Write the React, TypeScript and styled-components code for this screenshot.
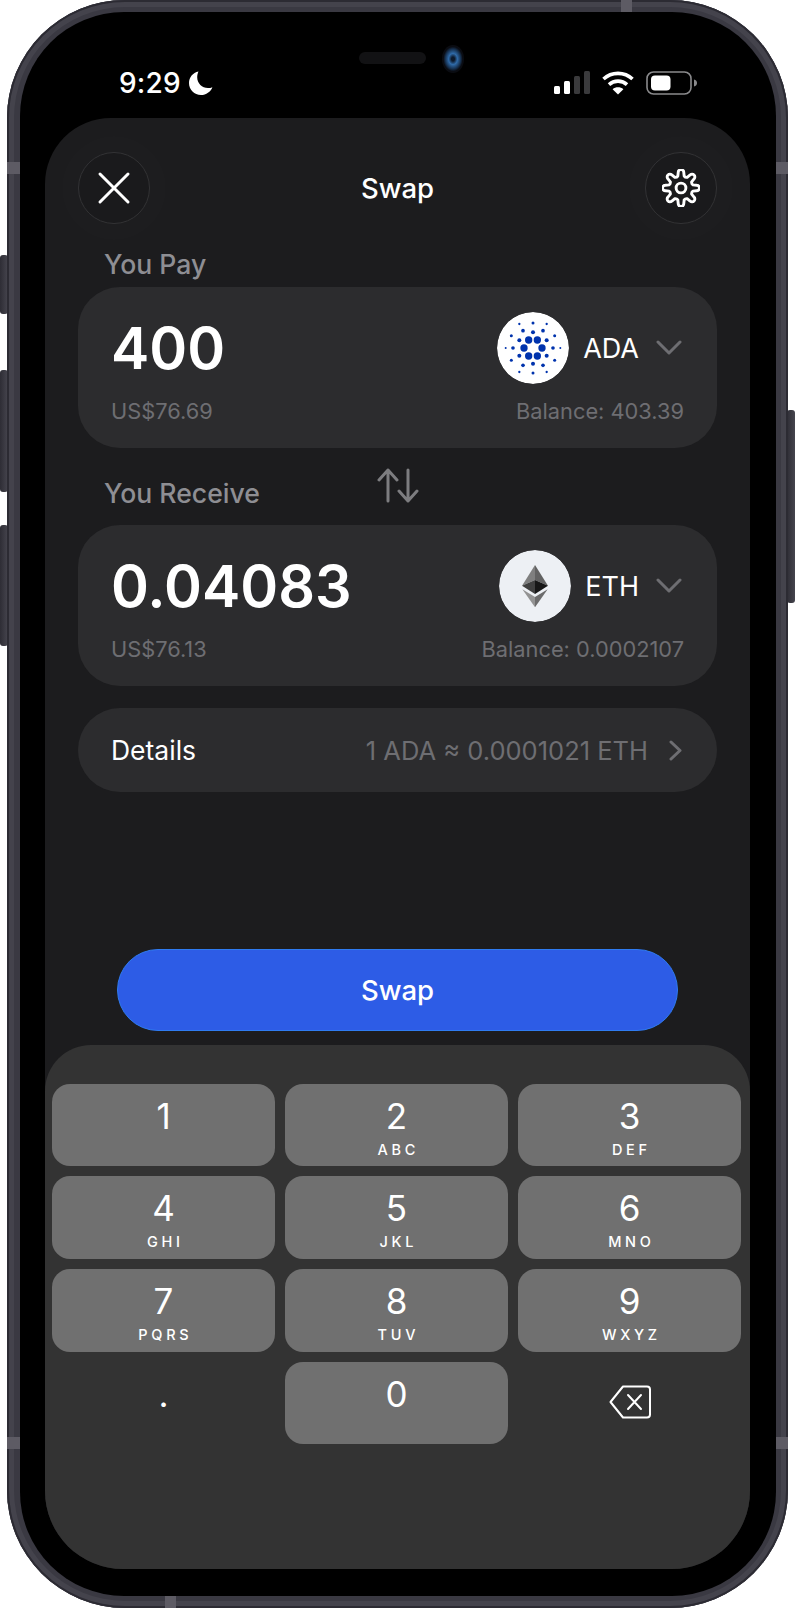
import styled, { createGlobalStyle } from 'styled-components';

const GlobalStyle = createGlobalStyle`
  html, body {
    margin: 0;
    padding: 0;
    background: #fff;
  }

  * {
    box-sizing: border-box;
  }
`;

const Page = styled.div`
  position: relative;
  width: 796px;
  height: 1608px;
  padding-left: 7px;
  font-family: Inter, 'Liberation Sans', sans-serif;
  overflow: hidden;
`;

const SideButton = styled.div<{ $top: number; $height: number; $right?: boolean }>`
  position: absolute;
  top: ${({ $top }) => $top}px;
  height: ${({ $height }) => $height}px;
  width: 8px;
  ${({ $right }) => ($right ? 'left: 787px;' : 'left: 0;')}
  background: linear-gradient(90deg, #2e2d35, #46454e);
  border-radius: 3px;
`;

const Frame = styled.div`
  position: relative;
  width: 781px;
  height: 1608px;
  padding: 12px 12px 12px 13px;
  border-radius: 118px;
  background: #3a3942;
  box-shadow: inset 0 0 0 2px #2c2b33, inset 0 0 0 7px #44434c;
`;

const Band = styled.div<{ $edge: 'left' | 'right' | 'top' | 'bottom'; $at: number }>`
  position: absolute;
  background: #5d5b64;
  ${({ $edge, $at }) =>
    $edge === 'left' || $edge === 'right'
      ? `${$edge}: 0; top: ${$at}px; width: 13px; height: 12px;`
      : `${$edge}: 0; left: ${$at}px; height: 12px; width: 11px;`}
`;

const Bezel = styled.div`
  position: relative;
  display: flex;
  flex-direction: column;
  height: 100%;
  padding: 0 26px 27px 25px;
  background: #000;
  border-radius: 104px;
`;

const Speaker = styled.div`
  position: absolute;
  top: 40px;
  left: 339px;
  width: 67px;
  height: 12px;
  border-radius: 6px;
  background: #121214;
`;

const Camera = styled.div`
  position: absolute;
  top: 33px;
  left: 422px;
  width: 22px;
  height: 28px;
  border-radius: 50%;
  background: radial-gradient(ellipse at center, #0d1a2c 0 10%, #2f6aa8 28%, #16304f 50%, #0a0c12 62%);
`;

const StatusBar = styled.div`
  display: flex;
  align-items: center;
  justify-content: space-between;
  height: 106px;
  padding: 36px 52px 0 74px;
  color: #fff;
`;

const TimeGroup = styled.div`
  display: flex;
  align-items: center;
  gap: 8px;
`;

const Time = styled.span`
  font-size: 28px;
  font-weight: 500;
  letter-spacing: 0.2px;
`;

const StatusIcons = styled.div`
  display: flex;
  align-items: center;
  gap: 12px;
`;

const Screen = styled.div`
  flex: 1;
  display: flex;
  flex-direction: column;
  background: #1c1c1e;
  border-radius: 66px 66px 78px 78px;
  overflow: hidden;
`;

const Content = styled.div`
  display: flex;
  flex-direction: column;
  padding: 34px 33px 0;
`;

const Header = styled.header`
  display: flex;
  align-items: center;
  justify-content: space-between;
  height: 72px;
  margin-bottom: 24px;
`;

const RoundButton = styled.button`
  display: flex;
  align-items: center;
  justify-content: center;
  width: 72px;
  height: 72px;
  padding: 0;
  border-radius: 50%;
  border: 1px solid #333335;
  background: #1a1a1c;
  color: #fff;
  box-shadow: 0 0 0 16px rgba(255, 255, 255, 0.006);
`;

const Title = styled.h1`
  margin: 0;
  font-size: 27.5px;
  font-weight: 500;
  color: #fff;
`;

const SectionLabel = styled.div`
  height: 32px;
  margin-left: 26px;
  font-size: 26.6px;
  line-height: 32px;
  font-weight: 500;
  color: #8e8e93;
`;

const SwitchRow = styled.div`
  display: grid;
  grid-template-columns: 1fr auto 1fr;
  height: 77px;

  ${SectionLabel} {
    align-self: end;
    margin-bottom: 16px;
  }
`;

const SwitchIcon = styled.svg`
  margin-top: 20px;
  width: 42px;
  height: 35px;
`;

const Gap = styled.div`
  height: 7px;
`;

const TokenCard = styled.section`
  display: flex;
  flex-direction: column;
  height: 161px;
  padding: 25px 33px 0 33px;
  border-radius: 42px;
  background: #2c2c2e;
`;

const TokenRow = styled.div`
  display: flex;
  align-items: center;
  justify-content: space-between;
  height: 72px;
`;

const Amount = styled.div`
  font-size: 57.5px;
  font-weight: 600;
  color: #fff;
`;

const TokenPicker = styled.div`
  display: flex;
  align-items: center;
  padding-right: 2px;
`;

const TokenLogo = styled.svg`
  width: 72px;
  height: 72px;
  border-radius: 50%;
`;

const TokenName = styled.span`
  margin-left: 14px;
  margin-right: 17px;
  font-size: 27px;
  font-weight: 400;
  color: #fff;
`;

const MetaRow = styled.div`
  display: flex;
  justify-content: space-between;
  margin-top: 15px;
  font-size: 21.8px;
  line-height: 24px;
  color: #6e6e72;
`;

const DetailsRow = styled.div`
  display: flex;
  align-items: center;
  height: 84px;
  margin-top: 22px;
  padding: 0 35px 0 33px;
  border-radius: 42px;
  background: #2c2c2e;
`;

const DetailsLabel = styled.span`
  flex: 1;
  font-size: 26.5px;
  color: #fff;
`;

const Rate = styled.span`
  margin-right: 21px;
  font-size: 25.5px;
  color: #6e6e72;
`;

const SwapButton = styled.button`
  display: block;
  width: 561px;
  height: 82px;
  margin: auto 0 14px 72px;
  padding: 0;
  border: 1px solid #2f7bf0;
  border-radius: 41px;
  background: #2d5ce6;
  font-family: inherit;
  font-size: 27.5px;
  font-weight: 500;
  color: #fff;
`;

const Keypad = styled.div`
  display: grid;
  grid-template-columns: repeat(3, 223px);
  grid-auto-rows: 82.7px;
  gap: 10px;
  height: 524px;
  padding: 38.5px 9px 0 7px;
  border-radius: 46px 46px 0 0;
  background: #333333;
`;

const Key = styled.div<{ $plain?: boolean }>`
  display: flex;
  flex-direction: column;
  align-items: center;
  padding-top: 14px;
  border-radius: 18px;
  background: ${({ $plain }) => ($plain ? 'transparent' : '#707070')};
  color: #fff;
`;

const IconKey = styled(Key)`
  justify-content: center;
  padding: 0 0 2px;
`;

const Digit = styled.span`
  font-size: 35px;
  line-height: 36px;
`;

const Letters = styled.span`
  margin-top: 8px;
  font-size: 14.5px;
  line-height: 16px;
  font-weight: 500;
  letter-spacing: 3.7px;
  margin-right: -3.7px;
`;

// [x, y, r] in the first quadrant, mirrored on both axes
const ADA_DOTS: number[][] = [
  [27, 0, 11], [13, 24, 11], [41, 23, 6], [0, 47, 6], [60, 0, 5.5], [30, 52, 5.5],
  [65, 37, 4.5], [41, 72, 3.5], [0, 75, 4.5], [82, 0, 3],
];

function mirrored(dots: number[][]): number[][] {
  const out: number[][] = [];
  dots.forEach(([x, y, r]) => {
    [1, -1].forEach((sx) => {
      [1, -1].forEach((sy) => {
        if ((x === 0 && sx < 0) || (y === 0 && sy < 0)) return;
        out.push([x * sx, y * sy, r]);
      });
    });
  });
  return out;
}

function gearPath(): string {
  const at = (deg: number, r: number) => {
    const rad = ((deg - 90) * Math.PI) / 180;
    return `${(r * Math.cos(rad)).toFixed(2)} ${(r * Math.sin(rad)).toFixed(2)}`;
  };
  let d = '';
  for (let i = 0; i < 8; i += 1) {
    const a = i * 45;
    d += `${i === 0 ? 'M' : 'L'}${at(a - 15, 13.6)} `;
    d += `L${at(a - 10, 17.6)} A3 3 0 0 1 ${at(a + 10, 17.6)} L${at(a + 15, 13.6)} `;
    d += `Q${at(a + 22.5, 12.4)} ${at(a + 30, 13.6)} `;
  }
  return `${d}Z`;
}

function AdaLogo() {
  return (
    <TokenLogo viewBox="-108 -108 216 216">
      <circle r="108" fill="#fff" />
      {mirrored(ADA_DOTS).map(([x, y, r]) => (
        <circle key={`${x}-${y}`} cx={x} cy={y} r={r} fill="#0033ad" />
      ))}
    </TokenLogo>
  );
}

function EthLogo() {
  return (
    <TokenLogo viewBox="-108 -108 216 216">
      <circle r="108" fill="#edf0f4" />
      <polygon points="0,-63 -39,-1 0,-18" fill="#7f7f7f" />
      <polygon points="0,-63 39,-1 0,-18" fill="#626262" />
      <polygon points="-39,-1 0,-18 0,24" fill="#404040" />
      <polygon points="39,-1 0,-18 0,24" fill="#171717" />
      <polygon points="-38,10 0,64 0,33" fill="#939393" />
      <polygon points="38,10 0,64 0,33" fill="#6c6c6c" />
    </TokenLogo>
  );
}

function ChevronDown() {
  return (
    <svg width="26" height="16" viewBox="0 0 26 16" fill="none">
      <path d="M2 2 L13 13 L24 2" stroke="#6e6e72" strokeWidth="3" strokeLinecap="round" strokeLinejoin="round" />
    </svg>
  );
}

const KEYS = [
  ['1', ''], ['2', 'ABC'], ['3', 'DEF'],
  ['4', 'GHI'], ['5', 'JKL'], ['6', 'MNO'],
  ['7', 'PQRS'], ['8', 'TUV'], ['9', 'WXYZ'],
];

export default function App() {
  return (
    <Page>
      <GlobalStyle />
      <SideButton $top={255} $height={59} />
      <SideButton $top={370} $height={122} />
      <SideButton $top={525} $height={121} />
      <SideButton $top={410} $height={193} $right />
      <Frame>
        <Band $edge="left" $at={162} />
        <Band $edge="right" $at={162} />
        <Band $edge="left" $at={1437} />
        <Band $edge="right" $at={1437} />
        <Band $edge="top" $at={614} />
        <Band $edge="bottom" $at={158} />
        <Bezel>
          <Speaker />
          <Camera />
          <StatusBar>
            <TimeGroup>
              <Time>9:29</Time>
              <svg width="24" height="24" viewBox="0 0 24 24">
                <path d="M9.5 0.5 C3.8 1.6 0 6.4 0 12 C0 18.6 5.4 24 12 24 C17.2 24 21.6 20.8 23.4 16.2 C22 16.8 20.6 17.1 19 17.1 C13 17.1 8.2 12.3 8.2 6.3 C8.2 4.2 8.7 2.2 9.5 0.5 Z" fill="#fff" />
              </svg>
            </TimeGroup>
            <StatusIcons>
              <svg width="36" height="24" viewBox="0 0 36 24">
                <rect x="0" y="15" width="6" height="8" rx="1.5" fill="#fff" />
                <rect x="10" y="10" width="6" height="13" rx="1.5" fill="#fff" />
                <rect x="20" y="5" width="6" height="18" rx="1.5" fill="#3a3a3c" />
                <rect x="30" y="0" width="6" height="23" rx="1.5" fill="#3a3a3c" />
              </svg>
              <svg width="32" height="24" viewBox="0 0 32 24" fill="none">
                <path d="M1.5 8 C9.5 0.5 22.5 0.5 30.5 8" stroke="#fff" strokeWidth="3.6" />
                <path d="M7 13.6 C12 9 20 9 25 13.6" stroke="#fff" strokeWidth="3.6" />
                <path d="M16 23.5 L10.6 18.2 C13.6 15.6 18.4 15.6 21.4 18.2 Z" fill="#fff" />
              </svg>
              <svg width="52" height="24" viewBox="0 0 52 24" fill="none">
                <rect x="1" y="1" width="44" height="22" rx="6.5" stroke="#8a8a8c" strokeWidth="1.6" />
                <rect x="5" y="4.5" width="19.5" height="15" rx="4" fill="#fff" />
                <path d="M48 8.5 C50 9 51 10.4 51 12 C51 13.6 50 15 48 15.5 Z" fill="#8a8a8c" />
              </svg>
            </StatusIcons>
          </StatusBar>
          <Screen>
            <Content>
              <Header>
                <RoundButton aria-label="Close">
                  <svg width="34" height="34" viewBox="0 0 34 34" fill="none">
                    <path d="M3 3 L31 31 M31 3 L3 31" stroke="#fff" strokeWidth="3" strokeLinecap="round" />
                  </svg>
                </RoundButton>
                <Title>Swap</Title>
                <RoundButton aria-label="Settings">
                  <svg width="38" height="38" viewBox="-21 -21 42 42" fill="none" stroke="#fff" strokeWidth="3.2" strokeLinejoin="round">
                    <path d={gearPath()} />
                    <circle r="5.4" />
                  </svg>
                </RoundButton>
              </Header>
              <SectionLabel>You Pay</SectionLabel>
              <Gap />
              <TokenCard>
                <TokenRow>
                  <Amount>400</Amount>
                  <TokenPicker>
                    <AdaLogo />
                    <TokenName>ADA</TokenName>
                    <ChevronDown />
                  </TokenPicker>
                </TokenRow>
                <MetaRow>
                  <span>US$76.69</span>
                  <span>Balance: 403.39</span>
                </MetaRow>
              </TokenCard>
              <SwitchRow>
                <SectionLabel>You Receive</SectionLabel>
                <SwitchIcon viewBox="0 0 42 35" fill="none">
                  <path
                    d="M11 33 V2 M2 12 L11 2 L20 12 M31 2 V33 M22 23 L31 33 L40 23"
                    stroke="#7d7d80"
                    strokeWidth="3"
                    strokeLinecap="round"
                    strokeLinejoin="round"
                  />
                </SwitchIcon>
              </SwitchRow>
              <TokenCard>
                <TokenRow>
                  <Amount>0.04083</Amount>
                  <TokenPicker>
                    <EthLogo />
                    <TokenName>ETH</TokenName>
                    <ChevronDown />
                  </TokenPicker>
                </TokenRow>
                <MetaRow>
                  <span>US$76.13</span>
                  <span>Balance: 0.0002107</span>
                </MetaRow>
              </TokenCard>
              <DetailsRow>
                <DetailsLabel>Details</DetailsLabel>
                <Rate>1 ADA ≈ 0.0001021 ETH</Rate>
                <svg width="13" height="21" viewBox="0 0 13 21" fill="none">
                  <path d="M2 2 L11 10.5 L2 19" stroke="#6e6e72" strokeWidth="3" strokeLinecap="round" strokeLinejoin="round" />
                </svg>
              </DetailsRow>
            </Content>
            <SwapButton>Swap</SwapButton>
            <Keypad>
              {KEYS.map(([digit, letters]) => (
                <Key key={digit}>
                  <Digit>{digit}</Digit>
                  {letters && <Letters>{letters}</Letters>}
                </Key>
              ))}
              <Key $plain>
                <Digit>.</Digit>
              </Key>
              <Key>
                <Digit>0</Digit>
              </Key>
              <IconKey $plain>
                <svg width="42" height="34" viewBox="0 0 42 34" fill="none">
                  <path
                    d="M14 1.5 H38 A3 3 0 0 1 41 4.5 V29.5 A3 3 0 0 1 38 32.5 H14 L1.5 17 Z"
                    stroke="#fff"
                    strokeWidth="2"
                    strokeLinejoin="round"
                  />
                  <path d="M19 10 L32 24 M32 10 L19 24" stroke="#fff" strokeWidth="2" strokeLinecap="round" />
                </svg>
              </IconKey>
            </Keypad>
          </Screen>
        </Bezel>
      </Frame>
    </Page>
  );
}
